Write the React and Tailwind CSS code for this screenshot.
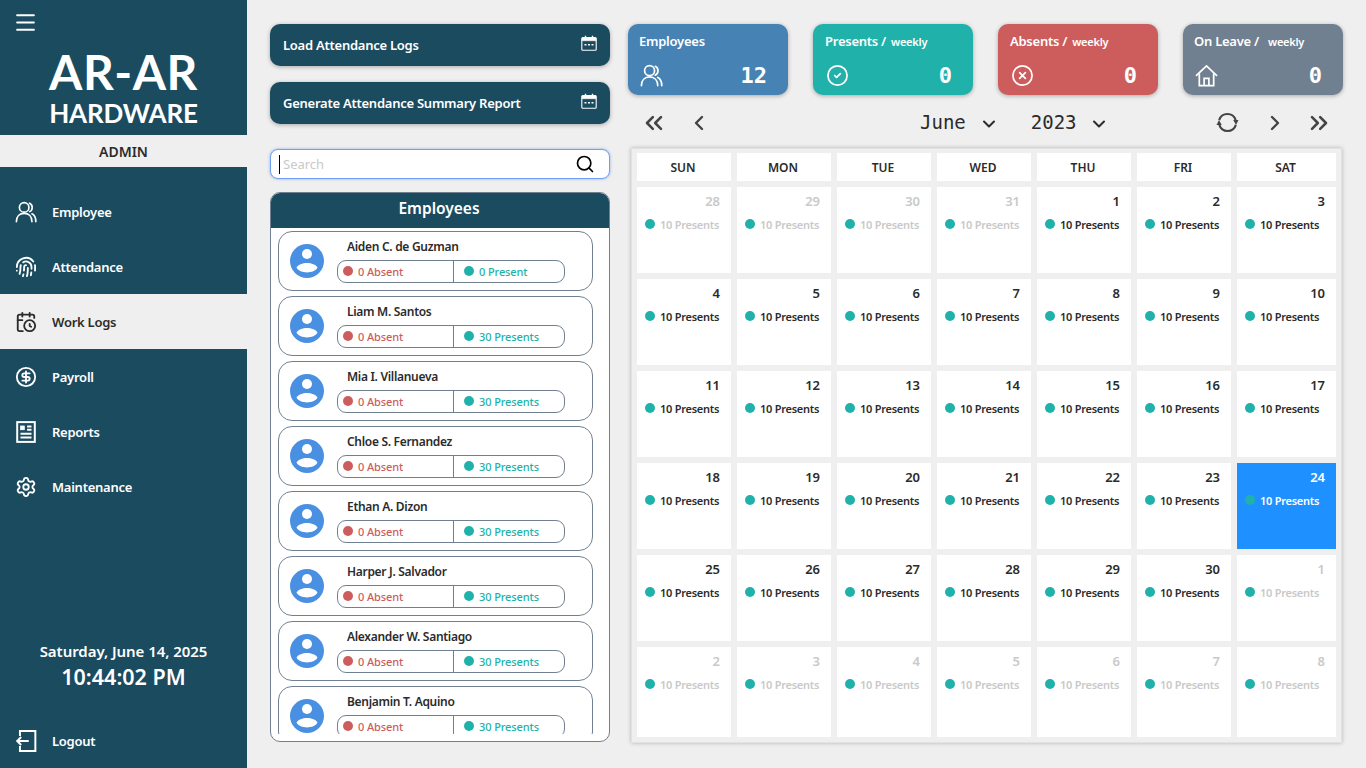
import {
  Menu, Fingerprint, CalendarClock, CircleDollarSign, Settings, Search,
  CircleCheck, CircleX, ChevronsLeft, ChevronLeft, ChevronRight, ChevronsRight,
  ChevronDown,
} from 'lucide-react';

const sans = 'font-["Noto_Sans","Open_Sans",sans-serif]';

function PeopleIcon({ className }) {
  return (
    <svg viewBox="0 0 24 24" fill="none" stroke="currentColor" strokeWidth="1.8" strokeLinecap="round" className={className}>
      <circle cx="10" cy="7" r="5.2" />
      <path d="M1.5 22.5c0-5.5 3.5-9 8.5-9s8.5 3.5 8.5 9" />
      <path d="M16 2.4a5.2 5.2 0 0 1 0 9.2" />
      <path d="M18.5 14c2.700 1.300 4.200 4.500 4.200 8.500" />
    </svg>
  );
}

function ReportIcon({ className }) {
  return (
    <svg viewBox="0 0 20 20" fill="none" stroke="currentColor" strokeWidth="1.8" className={className}>
      <rect x="2" y="1" width="16" height="18" />
      <rect x="5" y="4.500" width="3.500" height="3.500" fill="currentColor" strokeWidth="0.6" />
      <path d="M11 5h4M11 8h4M5 11.500h10M5 15h10" />
    </svg>
  );
}

function LogoutIcon({ className }) {
  return (
    <svg viewBox="0 0 20 20" fill="none" stroke="currentColor" strokeWidth="1.8" className={className}>
      <path d="M4.500 5.500V1h14v18h-14v-4.500" />
      <path d="M12.500 10H2M5.600 6.400 2 10l3.600 3.600" />
    </svg>
  );
}

function HomeIcon({ className }) {
  return (
    <svg viewBox="0 0 24 24" fill="none" stroke="currentColor" strokeWidth="1.8" className={className}>
      <path d="M1 12.500 12 2l11 10.500" />
      <path d="M4.500 10v12.500h15V10" />
      <path d="M9.500 22.500V15h5v7.500" />
    </svg>
  );
}

function SmallCalendar({ className }) {
  return (
    <svg viewBox="0 0 16 16" fill="none" stroke="currentColor" strokeWidth="1.100" className={className}>
      <rect x="0.800" y="2.500" width="14.400" height="12.700" rx="1" />
      <path d="M1 3h14v2.800H1Z" fill="currentColor" strokeWidth="0.400" />
      <path d="M4.500 0.800v2.500M11.500 0.800v2.500" strokeWidth="1.400" />
      <path d="M3.500 9.800h2M7 9.800h2M10.500 9.800h2" strokeWidth="1.500" />
    </svg>
  );
}

function RefreshIcon({ className }) {
  return (
    <svg viewBox="0 0 24 24" fill="none" stroke="currentColor" strokeWidth="2.200" className={className}>
      <path d="M3.300 9.500A9 9 0 0 1 20.500 9.500" />
      <path d="M20.700 14.500A9 9 0 0 1 3.500 14.500" />
      <path d="M18 9.500h5.500l-2.600 5Z" fill="currentColor" stroke="none" />
      <path d="M6 14.500H.5l2.600-5Z" fill="currentColor" stroke="none" />
    </svg>
  );
}

function Avatar() {
  return (
    <svg viewBox="0 0 34 34" className="w-[34px] h-[34px] shrink-0 mb-[1px]">
      <circle cx="17" cy="17" r="17" fill="#4a90e2" />
      <circle cx="17" cy="10" r="5" fill="#fff" />
      <path d="M6.500 23.500C10 17.500 24 17.500 27.500 23.500 24 30 10 30 6.500 23.500Z" fill="#fff" />
    </svg>
  );
}

const navItems = [
  { label: 'Employee', icon: PeopleIcon },
  { label: 'Attendance', icon: Fingerprint },
  { label: 'Work Logs', icon: CalendarClock, active: true },
  { label: 'Payroll', icon: CircleDollarSign },
  { label: 'Reports', icon: ReportIcon },
  { label: 'Maintenance', icon: Settings },
];

const employees = [
  { name: 'Aiden C. de Guzman', present: '0 Present' },
  { name: 'Liam M. Santos', present: '30 Presents' },
  { name: 'Mia I. Villanueva', present: '30 Presents' },
  { name: 'Chloe S. Fernandez', present: '30 Presents' },
  { name: 'Ethan A. Dizon', present: '30 Presents' },
  { name: 'Harper J. Salvador', present: '30 Presents' },
  { name: 'Alexander W. Santiago', present: '30 Presents' },
  { name: 'Benjamin T. Aquino', present: '30 Presents' },
];

const stats = [
  { title: 'Employees', value: '12', icon: PeopleIcon, bg: 'bg-[#4682b4] pl-[11px]' },
  { title: 'Presents /', sub: 'weekly', value: '0', icon: CircleCheck, bg: 'bg-[#20b2aa] pl-[12px]' },
  { title: 'Absents /', sub: 'weekly', value: '0', icon: CircleX, bg: 'bg-[#cd5c5c] pl-[12px]' },
  { title: 'On Leave /', sub: 'weekly', subGap: 'ml-[4px]', value: '0', icon: HomeIcon, bg: 'bg-[#708090] pl-[11px]' },
];

const weekdays = ['SUN', 'MON', 'TUE', 'WED', 'THU', 'FRI', 'SAT'];

const days = [
  ...[28, 29, 30, 31].map((d) => ({ d, muted: true })),
  ...Array.from({ length: 30 }, (_, i) => ({ d: i + 1, today: i + 1 === 24 })),
  ...[1, 2, 3, 4, 5, 6, 7, 8].map((d) => ({ d, muted: true })),
];

function Sidebar() {
  return (
    <aside className="w-[247px] h-[768px] shrink-0 bg-[#1b4b5f] text-white flex flex-col">
      <div className="h-[135px] relative flex flex-col items-center pt-[46px]">
        <Menu className="absolute left-[13px] top-[10px] w-[25px] h-[25px]" strokeWidth={2} />
        <div className='font-["Lato",sans-serif] font-bold text-[48px] leading-[52px] tracking-[0.5px]'>AR-AR</div>
        <div className='font-["Lato",sans-serif] font-bold text-[26px] leading-[30px] tracking-[-0.2px]'>HARDWARE</div>
      </div>
      <div className="h-[32px] bg-[#efefef] text-[#2b2b2b] text-[14px] font-semibold flex items-center justify-center">ADMIN</div>
      <nav className="mt-[17px]">
        {navItems.map((item) => {
          const Icon = item.icon;
          return (
            <div
              key={item.label}
              className={`h-[55px] flex items-center pl-[15px] gap-[15px] text-[13px] font-semibold tracking-[-0.25px] ${item.active ? 'bg-[#efefef] text-[#2b2b2b]' : ''}`}
            >
              <Icon className="w-[22px] h-[22px] shrink-0" strokeWidth={2} />
              <span className="pt-[2px]">{item.label}</span>
            </div>
          );
        })}
      </nav>
      <div className="mt-auto text-center">
        <div className="text-[15px] font-semibold leading-[20px] tracking-[-0.05px]">Saturday, June 14, 2025</div>
        <div className="text-[21.500px] font-semibold leading-[30px] mt-[1px]">10:44:02 PM</div>
      </div>
      <div className="h-[55px] mt-[21px] flex items-center pl-[15px] gap-[15px] text-[13px] font-semibold tracking-[-0.25px]">
        <LogoutIcon className="w-[22px] h-[22px] shrink-0" />
        <span className="pt-[2px]">Logout</span>
      </div>
    </aside>
  );
}

function ActionButton({ label, className }) {
  return (
    <button className={`w-[340px] h-[42px] bg-[#1b4b5f] text-white rounded-[10px] shadow-[0_1px_4px_rgba(0,0,0,0.3)] flex items-center justify-between px-[13px] text-[13px] font-semibold tracking-[-0.25px] ${className || ''}`}>
      <span className="pt-[2px]">{label}</span>
      <SmallCalendar className="w-[16px] h-[16px] -translate-y-[2px]" />
    </button>
  );
}

function EmployeeCard({ emp }) {
  return (
    <div className="w-[315px] h-[60px] shrink-0 border border-[#708090] rounded-[14px] bg-white flex items-center pl-[11px]">
      <Avatar />
      <div className="ml-[13px] w-[228px]">
        <div className="pl-[10px] text-[12px] font-semibold text-[#2b2b2b] leading-[16px] mb-[5px] tracking-[-0.3px]">{emp.name}</div>
        <div className="h-[23px] border border-[#708090] rounded-[9px] flex text-[11px] font-medium tracking-[-0.1px]">
          <div className="w-[116px] border-r border-[#708090] flex items-center pl-[5px] gap-[5px] text-[#cd5c5c]">
            <span className="w-[10px] h-[10px] rounded-full bg-[#cd5c5c] -translate-y-[1px]" />
            <span className="pt-[2px]">0 Absent</span>
          </div>
          <div className="flex items-center pl-[10px] gap-[5px] text-[#20b2aa]">
            <span className="w-[10px] h-[10px] rounded-full bg-[#20b2aa] -translate-y-[1px]" />
            <span className="pt-[2px]">{emp.present}</span>
          </div>
        </div>
      </div>
    </div>
  );
}

function LeftColumn() {
  return (
    <div className="w-[340px] shrink-0 ml-[23px] pt-[24px] flex flex-col">
      <ActionButton label="Load Attendance Logs" />
      <ActionButton label="Generate Attendance Summary Report" className="mt-[16px]" />
      <div className="mt-[25px] h-[30px] relative bg-white border border-[#6f9ff5] rounded-[8px] shadow-[0_0_3px_rgba(60,110,220,0.5)] flex items-center pl-[12px] pr-[14px]">
        <span className="absolute left-[8px] top-[5px] w-px h-[19px] bg-black" />
        <input placeholder="Search" className="flex-1 min-w-0 outline-none text-[13px] pt-[2px] placeholder:text-[#c9c9c9]" />
        <Search className="w-[20px] h-[20px] text-black" strokeWidth={2} />
      </div>
      <div className="mt-[13px] h-[550px] border border-[#708090] rounded-[10px] bg-white overflow-hidden flex flex-col">
        <div className="h-[35px] shrink-0 bg-[#1b4b5f] text-white text-[15.500px] font-semibold flex items-center justify-center pb-[4px] pr-[2px]">Employees</div>
        <div className="h-[506px] overflow-hidden pl-[7px] pt-[3px] flex flex-col gap-[5px]">
          {employees.map((emp) => (
            <EmployeeCard key={emp.name} emp={emp} />
          ))}
        </div>
      </div>
    </div>
  );
}

function StatCard({ stat }) {
  const Icon = stat.icon;
  return (
    <div className={`w-[160px] h-[71px] rounded-[10px] text-white shadow-[0_1px_4px_rgba(0,0,0,0.3)] pr-[12px] pt-[8px] ${stat.bg}`}>
      <div className="h-[20px] flex items-baseline gap-[5px] text-[13px] font-semibold tracking-[-0.25px]">
        <span>{stat.title}</span>
        {stat.sub && <span className={`text-[11px] ${stat.subGap || ''}`}>{stat.sub}</span>}
      </div>
      <div className="flex items-center justify-between mt-[9px] pr-[9px]">
        <Icon className="w-[23px] h-[23px] ml-[1px]" strokeWidth={1.8} />
        <span className='font-["DejaVu_Sans_Mono",monospace] font-bold text-[22px] leading-[26px] pt-[2px]'>{stat.value}</span>
      </div>
    </div>
  );
}

function DayCell({ day }) {
  const cellColor = day.today ? 'bg-[#1e90ff] text-white' : day.muted ? 'bg-white text-[#c9c9c9]' : 'bg-white text-[#2b2b2b]';
  return (
    <div className={`px-[8px] pt-[5px] ${cellColor}`}>
      <div className="text-right text-[13px] font-semibold leading-[18px] pr-[3px]">{day.d}</div>
      <div className="flex items-center gap-[5px] mt-[7px] text-[11px] font-semibold leading-[16px] tracking-[-0.25px]">
        <span className="w-[10px] h-[10px] rounded-full bg-[#20b2aa] -translate-y-[1px]" />
        <span>10 Presents</span>
      </div>
    </div>
  );
}

function CalendarPanel() {
  return (
    <div className="w-[716px] ml-[18px] pt-[24px] flex flex-col">
      <div className="flex gap-[25px]">
        {stats.map((s) => (
          <StatCard key={s.title} stat={s} />
        ))}
      </div>
      <div className='h-[53px] pt-[2px] flex items-center text-[#2b2b2b] font-["DejaVu_Sans_Mono",monospace]'>
        <ChevronsLeft className="w-[28px] h-[28px] ml-[12px] text-[#444444]" strokeWidth={2.2} />
        <ChevronLeft className="w-[24px] h-[24px] ml-[19px] text-[#444444]" strokeWidth={2.4} />
        <span className="ml-[209px] text-[19px]">June</span>
        <ChevronDown className="w-[20px] h-[20px] ml-[13px] translate-y-[1px]" strokeWidth={2.4} />
        <span className="ml-[32px] text-[19px]">2023</span>
        <ChevronDown className="w-[20px] h-[20px] ml-[12px] translate-y-[1px]" strokeWidth={2.4} />
        <RefreshIcon className="w-[23px] h-[23px] ml-[107px] text-[#444444]" />
        <ChevronRight className="w-[24px] h-[24px] ml-[24px] text-[#444444]" strokeWidth={2.4} />
        <ChevronsRight className="w-[28px] h-[28px] ml-[18px] text-[#444444]" strokeWidth={2.2} />
      </div>
      <div className="ml-[3px] w-[711px] h-[595px] pt-[4px] px-[5px] pb-[5px] bg-[#efefef] border border-[#e2e2e2] shadow-[0_0_4px_rgba(0,0,0,0.25)] grid grid-cols-[94px_94px_94px_94px_94px_94px_99px] grid-rows-[28px_86px_86px_86px_86px_86px_90px] gap-[6px]">
        {weekdays.map((w) => (
          <div key={w} className="bg-white text-[#2b2b2b] text-[12px] font-semibold flex items-center justify-center pt-[2px] pr-[2px]">{w}</div>
        ))}
        {days.map((day, i) => (
          <DayCell key={i} day={day} />
        ))}
      </div>
    </div>
  );
}

export default function App() {
  return (
    <div className={`w-[1366px] h-[768px] overflow-hidden bg-[#efefef] flex ${sans}`}>
      <Sidebar />
      <LeftColumn />
      <CalendarPanel />
    </div>
  );
}
